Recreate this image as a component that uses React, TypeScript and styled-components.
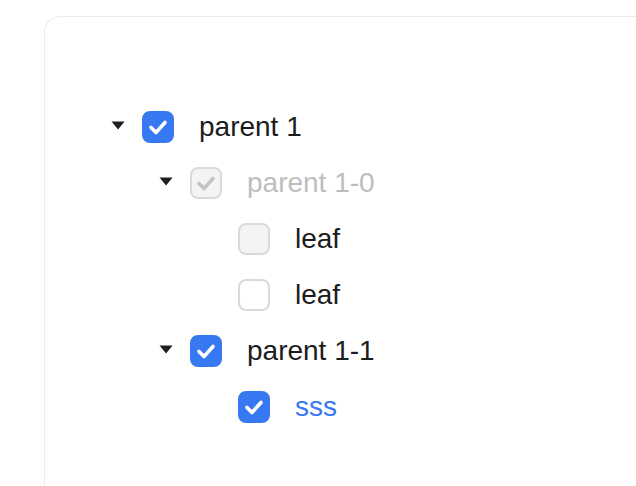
import React from "react";
import styled, { createGlobalStyle } from "styled-components";

const GlobalStyle = createGlobalStyle`
  html, body {
    margin: 0;
    padding: 0;
    background: #ffffff;
    overflow: hidden;
  }
  body {
    font-family: "Liberation Sans", Arial, sans-serif;
  }
`;

// the card runs off the right and bottom edges in the shot, so only its
// top and left borders are visible
const Card = styled.div`
  margin: 16px 0 0 44px;
  height: 470px;
  border-top: 1px solid #ececec;
  border-left: 1px solid #ececec;
  border-top-left-radius: 16px;
  padding: 86px 0 0 49px;
  box-sizing: border-box;
`;

const TreeList = styled.ul`
  list-style: none;
  margin: 0;
  padding: 0;
`;

const Node = styled.li`
  display: flex;
  align-items: center;
  height: 48px;
  margin-bottom: 8px;
`;

const Indent = styled.span<{ $level: number }>`
  display: inline-block;
  flex: none;
  width: ${({ $level }) => $level * 48}px;
`;

const Switcher = styled.span`
  display: flex;
  flex: none;
  width: 48px;
  height: 48px;
  align-items: center;
  justify-content: center;
  padding-bottom: 4px;
  box-sizing: border-box;
  color: #1f1f1f;
`;

const Box = styled.span<{ $checked?: boolean; $disabled?: boolean }>`
  display: flex;
  flex: none;
  align-items: center;
  justify-content: center;
  width: 32px;
  height: 32px;
  box-sizing: border-box;
  border-radius: 8px;
  margin-right: 17px;
  border: 2px solid
    ${({ $checked, $disabled }) =>
      $disabled ? "#dadada" : $checked ? "#3778f3" : "#d9d9d9"};
  background: ${({ $checked, $disabled }) =>
    $disabled ? "#f4f4f4" : $checked ? "#3778f3" : "#ffffff"};
`;

const Title = styled.span<{ $tone?: "muted" | "link" }>`
  padding: 0 8px;
  font-size: 28px;
  line-height: 48px;
  white-space: nowrap;
  color: ${({ $tone }) =>
    $tone === "muted" ? "#bdbdbd" : $tone === "link" ? "#3778f3" : "#1c1c1c"};
`;

type Item = {
  title: string;
  level: number;
  expandable?: boolean;
  checked?: boolean;
  disabled?: boolean;
  tone?: "muted" | "link";
};

const items: Item[] = [
  { title: "parent 1", level: 0, expandable: true, checked: true },
  { title: "parent 1-0", level: 1, expandable: true, checked: true, disabled: true, tone: "muted" },
  { title: "leaf", level: 2, disabled: true },
  { title: "leaf", level: 2 },
  { title: "parent 1-1", level: 1, expandable: true, checked: true },
  { title: "sss", level: 2, checked: true, tone: "link" },
];

const Caret = () => (
  <svg width="14" height="9" viewBox="0 0 14 9">
    <path d="M0.5 0.5 H13.5 L7 8.5 Z" fill="currentColor" />
  </svg>
);

const Check = ({ color }: { color: string }) => (
  <svg width="28" height="28" viewBox="0 0 28 28">
    <path
      d="M7 14.5 L12 19.5 L21 9.5"
      fill="none"
      stroke={color}
      strokeWidth="3.6"
      strokeLinecap="round"
      strokeLinejoin="round"
    />
  </svg>
);

const App = () => (
  <>
    <GlobalStyle />
    <Card>
      <TreeList>
        {items.map((item, i) => (
          <Node key={i}>
            <Indent $level={item.level} />
            <Switcher>{item.expandable && <Caret />}</Switcher>
            <Box $checked={item.checked} $disabled={item.disabled}>
              {item.checked && <Check color={item.disabled ? "#c4c4c4" : "#ffffff"} />}
            </Box>
            <Title $tone={item.tone}>{item.title}</Title>
          </Node>
        ))}
      </TreeList>
    </Card>
  </>
);

export default App;
